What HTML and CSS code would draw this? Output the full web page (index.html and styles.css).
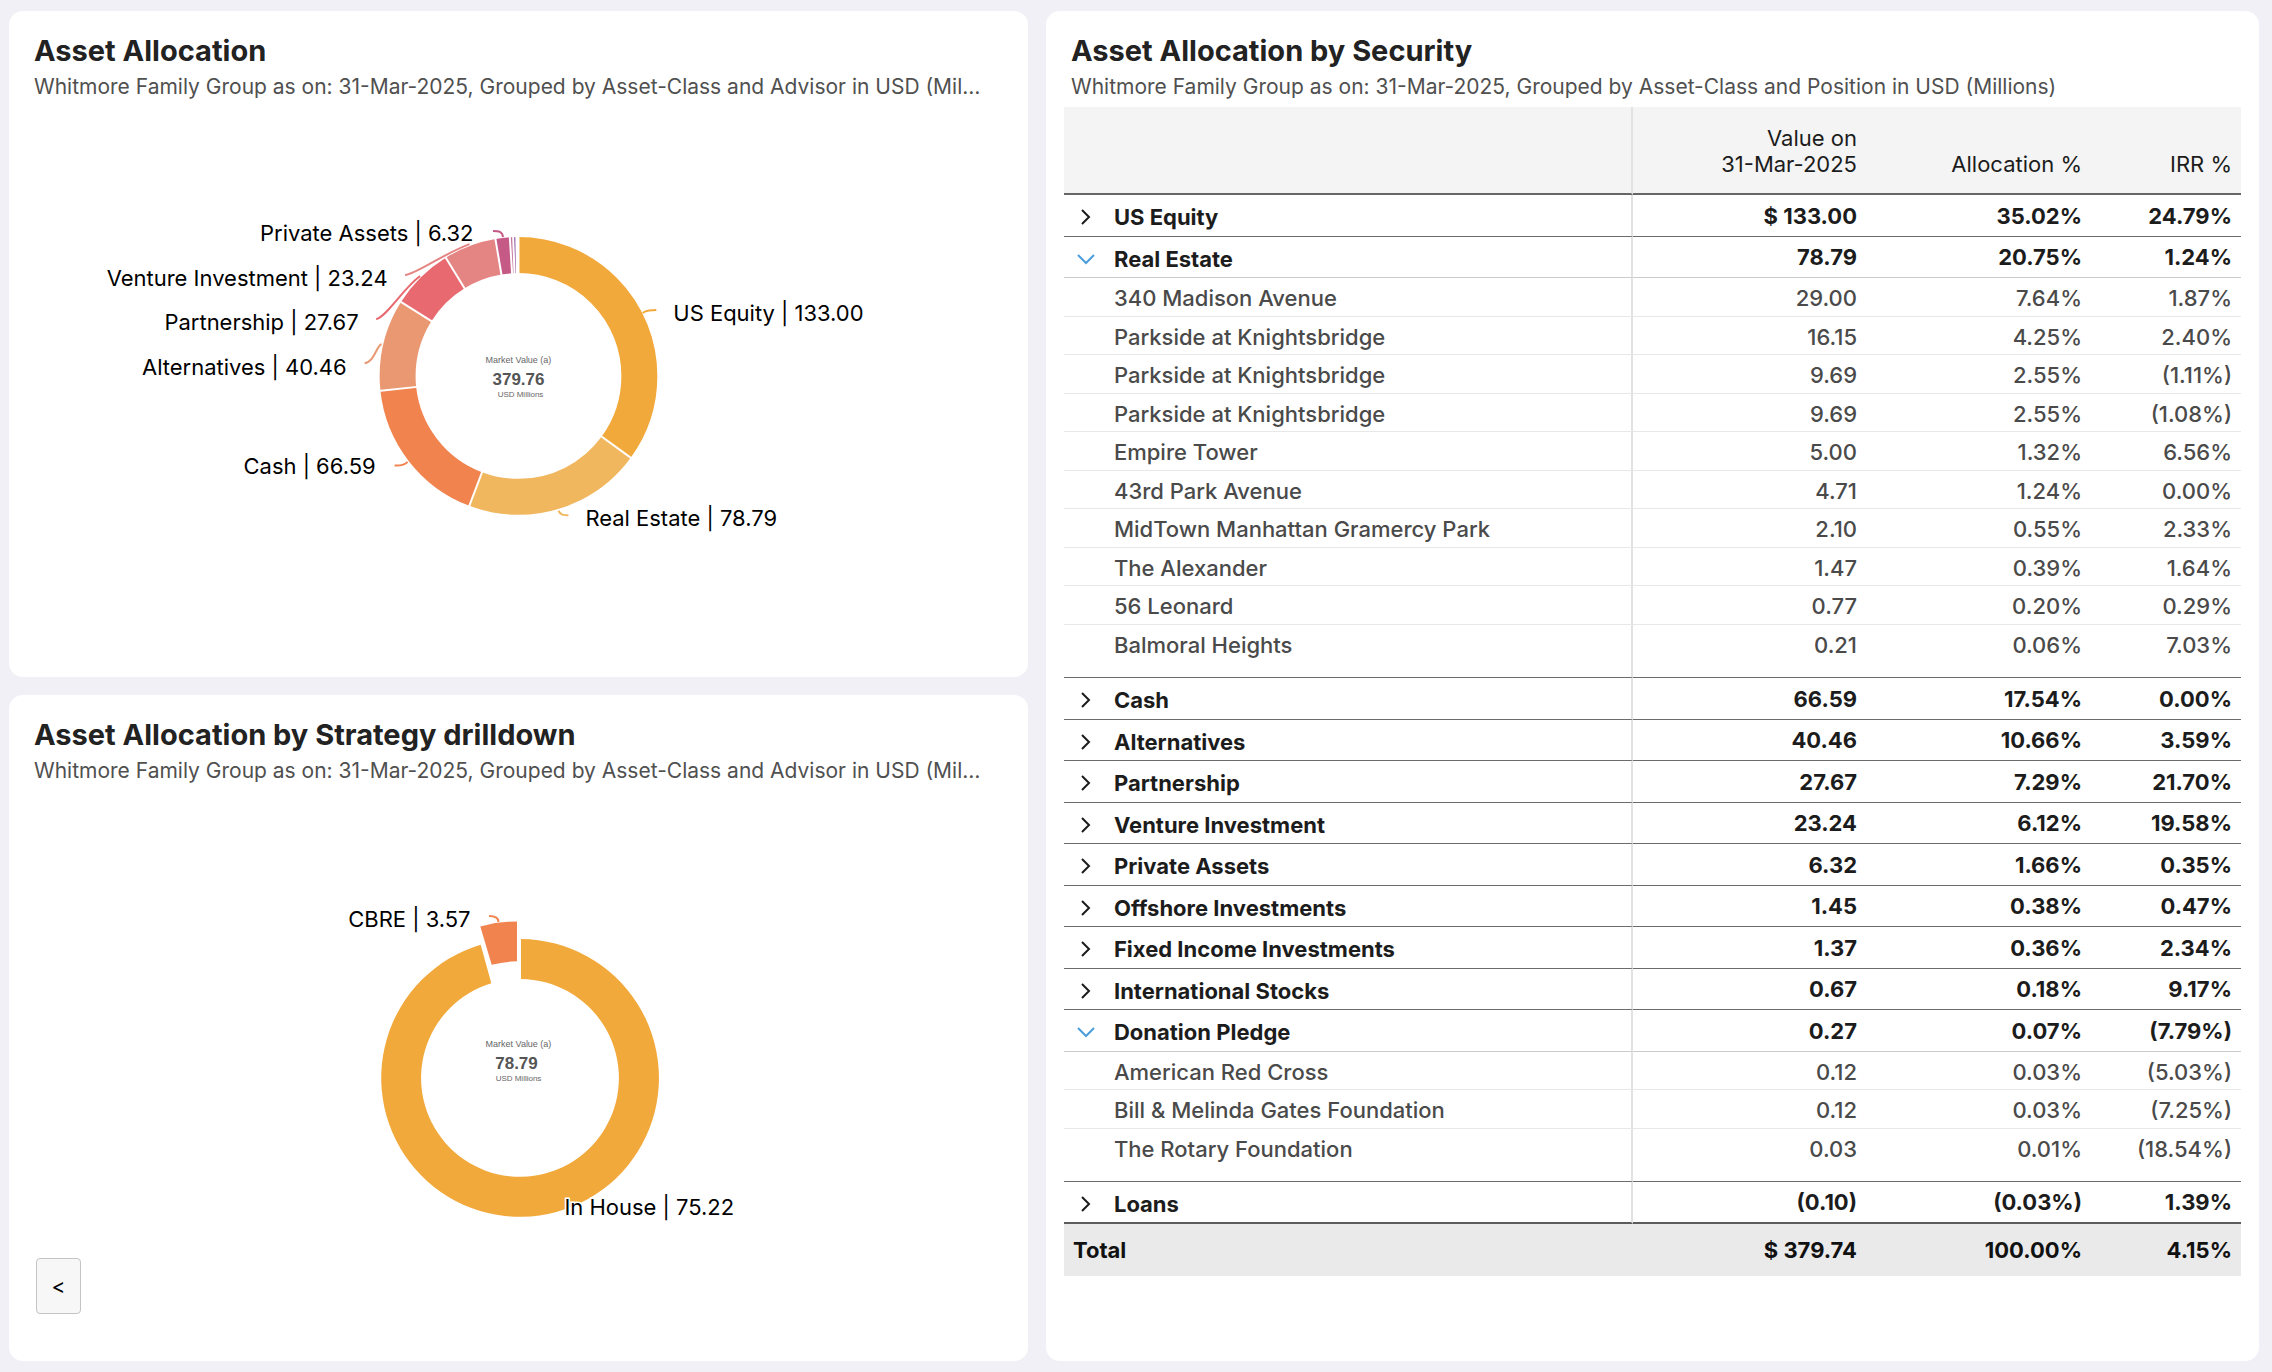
FILE: index.html
```html
<!DOCTYPE html>
<html lang="en">
<head>
    <meta charset="UTF-8">
    <meta name="viewport" content="width=device-width, initial-scale=1.0">
    <title>Asset Allocation</title>
    <link rel="stylesheet" href="styles.css">
</head>
<body>

    <!-- chevrons used by the table rows -->
    <svg class="icon-defs" aria-hidden="true">
        <symbol id="chevron-right" viewBox="0 0 18 18"><path d="M5 2 L12 9 L5 16" /></symbol>
        <symbol id="chevron-down" viewBox="0 0 18 18"><path d="M1 5 L9 13 L17 5" /></symbol>
    </svg>

    <main class="dashboard">

        <!-- Asset allocation donut -->
        <section class="card chart-card">
            <h2>Asset Allocation</h2>
            <p class="subtitle">Whitmore Family Group as on: 31-Mar-2025, Grouped by Asset-Class and Advisor in USD (Millions)</p>

            <svg class="chart" viewBox="-510 -269 1020 451" role="img" aria-label="Asset Allocation">
                <g class="ring">
                    <circle r="121" pathLength="379.83" stroke="#f2a93b" stroke-dasharray="133 379.83" />
                    <circle r="121" pathLength="379.83" stroke="#f1b75f" stroke-dasharray="78.79 379.83" stroke-dashoffset="-133" />
                    <circle r="121" pathLength="379.83" stroke="#f1834f" stroke-dasharray="66.59 379.83" stroke-dashoffset="-211.79" />
                    <circle r="121" pathLength="379.83" stroke="#ea9871" stroke-dasharray="40.46 379.83" stroke-dashoffset="-278.38" />
                    <circle r="121" pathLength="379.83" stroke="#e8696f" stroke-dasharray="27.67 379.83" stroke-dashoffset="-318.84" />
                    <circle r="121" pathLength="379.83" stroke="#e58583" stroke-dasharray="23.24 379.83" stroke-dashoffset="-346.51" />
                    <circle r="121" pathLength="379.83" stroke="#c65a86" stroke-dasharray="6.32 379.83" stroke-dashoffset="-369.75" />
                    <circle r="121" pathLength="379.83" stroke="#c4709a" stroke-dasharray="1.45 379.83" stroke-dashoffset="-376.07" />
                    <circle r="121" pathLength="379.83" stroke="#8a4f9e" stroke-dasharray="1.37 379.83" stroke-dashoffset="-377.52" />
                </g>
                <g class="dividers">
                    <line y1="-102" y2="-141" />
                    <line y1="-102" y2="-141" transform="rotate(126.06)" />
                    <line y1="-102" y2="-141" transform="rotate(200.73)" />
                    <line y1="-102" y2="-141" transform="rotate(263.85)" />
                    <line y1="-102" y2="-141" transform="rotate(302.19)" />
                    <line y1="-102" y2="-141" transform="rotate(328.42)" />
                    <line y1="-102" y2="-141" transform="rotate(350.45)" />
                    <line y1="-102" y2="-141" transform="rotate(356.44)" />
                    <line y1="-102" y2="-141" transform="rotate(357.81)" />
                    <line y1="-102" y2="-141" transform="rotate(359.11)" />
                </g>
                <g class="leaders">
                    <path stroke="#f2a93b" d="M124.5 -63 C127 -66 132 -65.5 138 -66" />
                    <path stroke="#f1b75f" d="M40 135 C42 139 45 139.5 50 139.5" />
                    <path stroke="#f1834f" d="M-124 89.7 C-118 90 -114 89.5 -111 86" />
                    <path stroke="#ea9871" d="M-154 -12.7 C-144 -14 -142 -31 -137 -31.7" />
                    <path stroke="#e8696f" d="M-142.5 -57 C-133 -58 -116 -87 -98.5 -100" />
                    <path stroke="#e58583" d="M-113.5 -101 C-102 -102 -76 -122 -49 -132" />
                    <path stroke="#c65a86" d="M-25.5 -145 C-20 -145 -16 -145 -15.5 -139" />
                </g>
                <g class="labels">
                    <text x="155" y="-55">US Equity | 133.00</text>
                    <text x="67" y="150">Real Estate | 78.79</text>
                    <text class="left" x="-143" y="98">Cash | 66.59</text>
                    <text class="left" x="-172" y="-1">Alternatives | 40.46</text>
                    <text class="left" x="-160" y="-46">Partnership | 27.67</text>
                    <text class="left" x="-131" y="-90">Venture Investment | 23.24</text>
                    <text class="left" x="-45" y="-135">Private Assets | 6.32</text>
                </g>
                <g class="center-text">
                    <text x="0" y="-13">Market Value (a)</text>
                    <text class="amount" x="0" y="9">379.76</text>
                    <text class="unit" x="2" y="21">USD Millions</text>
                </g>
            </svg>
        </section>

        <!-- Allocation by security table -->
        <section class="card table-card">
            <h2>Asset Allocation by Security</h2>
            <p class="subtitle">Whitmore Family Group as on: 31-Mar-2025, Grouped by Asset-Class and Position in USD (Millions)</p>

            <table class="security-table">
                <colgroup>
                    <col>
                    <col class="col-value">
                    <col class="col-allocation">
                    <col class="col-irr">
                </colgroup>
                <thead>
                    <tr><th></th><th>Value on<br>31-Mar-2025</th><th>Allocation %</th><th>IRR %</th></tr>
                </thead>
                <tbody>
                    <tr class="group"><td><button><svg><use href="#chevron-right" /></svg>US Equity</button></td><td>$ 133.00</td><td>35.02%</td><td>24.79%</td></tr>
                    <tr class="group open"><td><button><svg><use href="#chevron-down" /></svg>Real Estate</button></td><td>78.79</td><td>20.75%</td><td>1.24%</td></tr>
                    <tr><td>340 Madison Avenue</td><td>29.00</td><td>7.64%</td><td>1.87%</td></tr>
                    <tr><td>Parkside at Knightsbridge</td><td>16.15</td><td>4.25%</td><td>2.40%</td></tr>
                    <tr><td>Parkside at Knightsbridge</td><td>9.69</td><td>2.55%</td><td>(1.11%)</td></tr>
                    <tr><td>Parkside at Knightsbridge</td><td>9.69</td><td>2.55%</td><td>(1.08%)</td></tr>
                    <tr><td>Empire Tower</td><td>5.00</td><td>1.32%</td><td>6.56%</td></tr>
                    <tr><td>43rd Park Avenue</td><td>4.71</td><td>1.24%</td><td>0.00%</td></tr>
                    <tr><td>MidTown Manhattan Gramercy Park</td><td>2.10</td><td>0.55%</td><td>2.33%</td></tr>
                    <tr><td>The Alexander</td><td>1.47</td><td>0.39%</td><td>1.64%</td></tr>
                    <tr><td>56 Leonard</td><td>0.77</td><td>0.20%</td><td>0.29%</td></tr>
                    <tr class="last"><td>Balmoral Heights</td><td>0.21</td><td>0.06%</td><td>7.03%</td></tr>
                    <tr class="group"><td><button><svg><use href="#chevron-right" /></svg>Cash</button></td><td>66.59</td><td>17.54%</td><td>0.00%</td></tr>
                    <tr class="group"><td><button><svg><use href="#chevron-right" /></svg>Alternatives</button></td><td>40.46</td><td>10.66%</td><td>3.59%</td></tr>
                    <tr class="group"><td><button><svg><use href="#chevron-right" /></svg>Partnership</button></td><td>27.67</td><td>7.29%</td><td>21.70%</td></tr>
                    <tr class="group"><td><button><svg><use href="#chevron-right" /></svg>Venture Investment</button></td><td>23.24</td><td>6.12%</td><td>19.58%</td></tr>
                    <tr class="group"><td><button><svg><use href="#chevron-right" /></svg>Private Assets</button></td><td>6.32</td><td>1.66%</td><td>0.35%</td></tr>
                    <tr class="group"><td><button><svg><use href="#chevron-right" /></svg>Offshore Investments</button></td><td>1.45</td><td>0.38%</td><td>0.47%</td></tr>
                    <tr class="group"><td><button><svg><use href="#chevron-right" /></svg>Fixed Income Investments</button></td><td>1.37</td><td>0.36%</td><td>2.34%</td></tr>
                    <tr class="group"><td><button><svg><use href="#chevron-right" /></svg>International Stocks</button></td><td>0.67</td><td>0.18%</td><td>9.17%</td></tr>
                    <tr class="group open"><td><button><svg><use href="#chevron-down" /></svg>Donation Pledge</button></td><td>0.27</td><td>0.07%</td><td>(7.79%)</td></tr>
                    <tr><td>American Red Cross</td><td>0.12</td><td>0.03%</td><td>(5.03%)</td></tr>
                    <tr><td>Bill &amp; Melinda Gates Foundation</td><td>0.12</td><td>0.03%</td><td>(7.25%)</td></tr>
                    <tr class="last"><td>The Rotary Foundation</td><td>0.03</td><td>0.01%</td><td>(18.54%)</td></tr>
                    <tr class="group"><td><button><svg><use href="#chevron-right" /></svg>Loans</button></td><td>(0.10)</td><td>(0.03%)</td><td>1.39%</td></tr>
                </tbody>
                <tfoot>
                    <tr><td>Total</td><td>$ 379.74</td><td>100.00%</td><td>4.15%</td></tr>
                </tfoot>
            </table>
        </section>

        <!-- Strategy drilldown donut -->
        <section class="card chart-card">
            <h2>Asset Allocation by Strategy drilldown</h2>
            <p class="subtitle">Whitmore Family Group as on: 31-Mar-2025, Grouped by Asset-Class and Advisor in USD (Millions)</p>

            <svg class="chart" viewBox="-510 -269 1020 451" role="img" aria-label="Asset Allocation by Strategy drilldown">
                <path fill="#f2a93b" d="M2.5 -121 A139 139 0 1 1 -37.8 -115.3 L-27.2 -76.75 A99 99 0 1 0 2.5 -81 Z" />
                <path fill="#f1834f" d="M-1.5 -138.7 A139 139 0 0 0 -38.2 -133.7 L-26.8 -95.3 A99 99 0 0 1 -1.5 -98.7 Z" />
                <g class="leaders">
                    <path stroke="#f1834f" d="M-29.5 -144 C-25 -144 -20 -143 -20 -138" />
                </g>
                <g class="labels">
                    <text class="left" x="-48" y="-133">CBRE | 3.57</text>
                    <text x="46" y="155">In House | 75.22</text>
                </g>
                <g class="center-text">
                    <text x="0" y="-13">Market Value (a)</text>
                    <text class="amount" x="-2" y="9">78.79</text>
                    <text class="unit" x="0" y="21">USD Millions</text>
                </g>
            </svg>
            <button class="back-button" aria-label="Back">&lt;</button>
        </section>

    </main>

</body>
</html>
```
FILE: styles.css
```css
* { box-sizing: border-box; }
body { margin: 0; background: #f1f0f6; color: #1c1c1c; font-family: Inter, sans-serif; font-size: 22px; }
button { font: inherit; color: inherit; cursor: pointer; }
.icon-defs { display: none; }

.dashboard {
    display: grid;
    grid-template-columns: 21fr 25fr;
    grid-template-rows: 1fr 1fr;
    gap: 18px;
    min-height: 100vh;
    padding: 11px 13px 11px 9px;
}
.card { background: #fff; border-radius: 14px; padding-top: 23px; min-width: 0; }
.table-card { grid-row: 1 / 3; grid-column: 2; padding-bottom: 18px; }

h2 { margin: 0 25px 5px; font-size: 29px; line-height: 34px; font-weight: 700; color: #222; }
.subtitle {
    margin: 0 18px 6px 25px;
    font-size: 21px;
    line-height: 28px;
    color: #505050;
    white-space: nowrap;
    overflow: hidden;
    text-overflow: ellipsis;
}
.chart-card .subtitle { margin-right: 45px; }

/* charts */
.chart { display: block; width: 100%; height: 451px; }
.ring { fill: none; stroke-width: 36; transform: rotate(-90deg); }
.dividers { stroke: #fff; stroke-width: 2; }
.leaders { fill: none; stroke-width: 2; }
.labels { fill: #000; stroke: #fff; stroke-width: 3; paint-order: stroke; }
.labels .left { text-anchor: end; }
.center-text { font-family: "Liberation Sans", Arial, sans-serif; font-size: 9px; fill: #666; text-anchor: middle; }
.center-text .amount { font-size: 17px; font-weight: 700; fill: #555; }
.center-text .unit { font-size: 8px; }

.back-button {
    display: block;
    width: 45px;
    height: 56px;
    margin: 16px 0 0 27px;
    padding: 0;
    background: #f7f7f7;
    border: 1px solid #c4c4c4;
    border-radius: 4px;
    color: #000;
    font-size: 21px;
}

/* table */
.security-table {
    width: calc(100% - 36px);
    margin: 0 18px;
    table-layout: fixed;
    border-collapse: separate;
    border-spacing: 0;
    line-height: 26px;
}
.col-value { width: 233px; }
.col-allocation { width: 225px; }
.col-irr { width: 150px; }

th, td { padding: 0 9px; text-align: right; }
td:first-child { text-align: left; }
th:first-child, tbody td:first-child { border-right: 2px solid #e2e2e2; }

th { height: 88px; padding-bottom: 16px; background: #f4f4f4; border-bottom: 2px solid #666; font-weight: 400; vertical-align: bottom; }

tbody td { height: 38px; padding-top: 2px; border-bottom: 1px solid #e8e8e8; color: #4a4a4a; font-weight: 500; }
tbody tr:nth-child(odd) td { height: 39px; }
tbody td:first-child { padding-left: 50px; }
tbody .last td { height: 53px; padding-bottom: 14px; border-bottom-color: #6b6b6b; }

tbody .group td { height: 41px; padding-top: 0; border-bottom-color: #6b6b6b; color: #1c1c1c; font-weight: 700; }
tbody .group:nth-child(odd) td { height: 42px; }
tbody .group.open td { border-bottom-color: #ccc; }
tbody .group td:first-child { padding: 3px 10px 0 13px; }
.group button { display: flex; align-items: center; gap: 19px; padding: 0; border: 0; background: none; }
.group svg { width: 18px; height: 18px; fill: none; stroke: #1c1c1c; stroke-width: 2; }
.group.open svg { stroke: #4a9edb; }
tbody tr.group:last-child td { border-bottom: 2px solid #5c5c5c; }

tfoot td { height: 52px; background: #eaeaea; color: #111; font-weight: 700; }
```
